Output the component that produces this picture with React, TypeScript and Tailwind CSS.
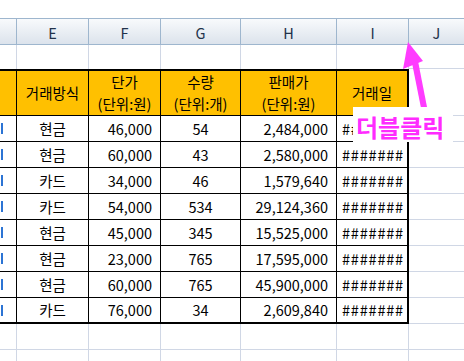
const rows = [
  ['현금', '46,000', '54', '2,484,000'],
  ['현금', '60,000', '43', '2,580,000'],
  ['카드', '34,000', '46', '1,579,640'],
  ['카드', '54,000', '534', '29,124,360'],
  ['현금', '45,000', '345', '15,525,000'],
  ['현금', '23,000', '765', '17,595,000'],
  ['현금', '60,000', '765', '45,900,000'],
  ['카드', '76,000', '34', '2,609,840'],
]

const letters = ['E', 'F', 'G', 'H', 'I']
const widths = ['w-[72px]', 'w-[72px]', 'w-[80px]', 'w-[96px]', 'w-[72px]']

function EmptyRow({ last }: { last?: boolean }) {
  return (
    <div className="flex h-[26px]">
      <div className="w-[17px] shrink-0 border-r border-b border-[#d0d7e5]" />
      {widths.map((w, i) => (
        <div key={i} className={`${w} shrink-0 border-r border-b border-[#d0d7e5]`} />
      ))}
      <div className={`flex-1 ${last ? '' : 'border-b'} border-[#d0d7e5]`} />
    </div>
  )
}

export default function App() {
  return (
    <div className="relative h-[361px] w-[464px] overflow-hidden bg-white font-['Noto_Sans_CJK_KR',sans-serif] text-[14.5px] text-black">
      <div className="h-[18px]" />

      {/* column letters */}
      <div className="flex h-[27px] border-y border-[#9eb6ce] bg-gradient-to-b from-[#f8fafc] to-[#dce3ec] text-[#22324a]">
        <div className="w-[17px] shrink-0 border-r border-[#9eb6ce]" />
        {letters.map((l, i) => (
          <div key={l} className={`${widths[i]} shrink-0 flex items-center justify-center border-r border-[#9eb6ce] pt-[2px]`}>
            {l}
          </div>
        ))}
        <div className="flex-1 flex items-center justify-center pt-[2px]">J</div>
      </div>

      {/* empty row above table */}
      <div className="flex h-[24px]">
        <div className="w-[17px] shrink-0 border-r border-[#d0d7e5]" />
        {widths.map((w, i) => (
          <div key={i} className={`${w} shrink-0 border-r border-[#d0d7e5]`} />
        ))}
        <div className="flex-1 border-b border-[#d0d7e5]" />
      </div>

      {/* table header */}
      <div className="flex h-[47px]">
        <div className="w-[17px] shrink-0 border-t-2 border-r border-b border-black bg-[#ffc000]" />
        <div className="w-[72px] shrink-0 flex items-center justify-center border-t-2 border-r border-b border-black bg-[#ffc000]">
          거래방식
        </div>
        <div className="w-[72px] shrink-0 flex flex-col items-center justify-center leading-[22px] border-t-2 border-r border-b border-black bg-[#ffc000]">
          <span>단가</span>
          <span>(단위:원)</span>
        </div>
        <div className="w-[80px] shrink-0 flex flex-col items-center justify-center leading-[22px] border-t-2 border-r border-b border-black bg-[#ffc000]">
          <span>수량</span>
          <span>(단위:개)</span>
        </div>
        <div className="w-[96px] shrink-0 flex flex-col items-center justify-center leading-[22px] border-t-2 border-r border-b border-black bg-[#ffc000]">
          <span>판매가</span>
          <span>(단위:원)</span>
        </div>
        <div className="w-[72px] shrink-0 flex items-center justify-center border-t-2 border-r-2 border-b border-black bg-[#ffc000]">
          거래일
        </div>
        <div className="flex-1 border-b border-[#d0d7e5]" />
      </div>

      {/* data rows */}
      {rows.map((r, i) => {
        const last = i === rows.length - 1
        const b = last ? 'border-b-2' : 'border-b'
        return (
          <div key={i} className="flex h-[26px]">
            <div className={`w-[17px] shrink-0 flex items-center border-r ${b} border-black`}>
              <div className="ml-[1px] h-[11px] w-[2px] bg-[#2c74d4]" />
            </div>
            <div className={`w-[72px] shrink-0 flex items-center justify-center border-r ${b} border-black`}>{r[0]}</div>
            <div className={`w-[72px] shrink-0 flex items-center justify-end pr-[8px] border-r ${b} border-black`}>{r[1]}</div>
            <div className={`w-[80px] shrink-0 flex items-center justify-center border-r ${b} border-black`}>{r[2]}</div>
            <div className={`w-[96px] shrink-0 flex items-center justify-end pr-[8px] border-r ${b} border-black`}>{r[3]}</div>
            <div className={`w-[72px] shrink-0 flex items-center pl-[5px] border-r-2 ${b} border-black tracking-[0.8px]`}>#######</div>
            <div className="flex-1 border-b border-[#d0d7e5]" />
          </div>
        )
      })}

      <EmptyRow />
      <EmptyRow last />

      {/* callout + arrow */}
      <svg className="pointer-events-none absolute left-0 top-0" width="464" height="361">
        <polygon points="408,42 423,61 403,69" fill="#ff3cff" />
        <polygon points="412,63 418,61 427,107 421,108" fill="#ff3cff" />
      </svg>
      <div className="absolute left-[353px] top-[107px] flex h-[35px] w-[100px] items-center bg-white pl-[3px] pt-[4px] text-[24px] font-bold leading-none text-[#ff2bff]">
        더블클릭
      </div>
    </div>
  )
}
